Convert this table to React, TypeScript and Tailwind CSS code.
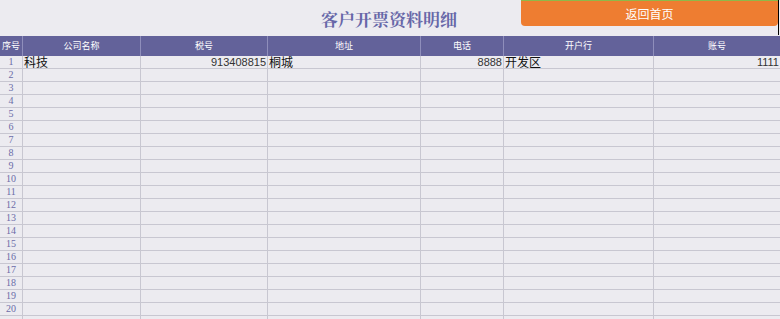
const cols = ["序号", "公司名称", "税号", "地址", "电话", "开户行", "账号"];

const firstRow = [
  { text: "科技", align: "left" },
  { text: "913408815", align: "right" },
  { text: "桐城", align: "left" },
  { text: "8888", align: "right" },
  { text: "开发区", align: "left" },
  { text: "1111", align: "right" },
];

// 20 numbered rows plus the top of the next one, cut off by the window
const rows = Array.from({ length: 21 }, (_, i) => i + 1);

const App = () => {
  return (
    <div className="w-[780px] h-[319px] overflow-hidden bg-[#ecebf0] font-['Noto_Sans_CJK_SC',sans-serif]">
      <div className="flex h-[36px]">
        <div className="w-[521px] flex justify-end items-center pr-[64px] pt-[2px]">
          <h1 className="text-[17px] font-bold text-[#6767a8] font-['Noto_Serif_CJK_SC','Noto_Sans_CJK_SC',serif]">
            客户开票资料明细
          </h1>
        </div>
        <div className="flex flex-col">
          <div className="h-[1px] w-[257px] bg-[#8fb84a]" />
          <button className="w-[257px] h-[25px] bg-[#ee7d31] rounded-b-[4px] text-white text-[12px] leading-none">
            返回首页
          </button>
        </div>
        <div className="w-[1px] h-[35px] bg-black" />
      </div>

      <div className="grid grid-cols-[23px_118px_127px_153px_83px_150px_126px]">
        {cols.map((c, i) => (
          <div
            key={c}
            className={`h-[20px] bg-[#63629a] text-white text-[9px] flex items-center justify-center border-[#8f8ebb] ${
              i < cols.length - 1 ? "border-r" : ""
            }`}
          >
            {c}
          </div>
        ))}

        {rows.map((r) => (
          <div key={r} className="contents">
            <div className="h-[13px] border-r border-b border-[#c8c7d1] text-[10px] leading-[12px] text-center text-[#6b6ba8] font-['Liberation_Serif',serif]">
              {r <= 20 ? r : ""}
            </div>
            {Array.from({ length: 6 }, (_, j) => {
              const cell = r === 1 ? firstRow[j] : null;
              const isText = cell && /[^0-9]/.test(cell.text);
              return (
                <div
                  key={j}
                  className={`h-[13px] border-b border-[#c8c7d1] px-[1px] whitespace-nowrap flex items-center ${
                    j < 5 ? "border-r" : ""
                  } ${cell?.align === "right" ? "justify-end" : "justify-start"} ${
                    isText
                      ? "text-[12px] leading-[12px] text-[#111]"
                      : "text-[11px] leading-[12px] text-[#333] font-['Liberation_Sans',sans-serif]"
                  }`}
                >
                  {cell?.text}
                </div>
              );
            })}
          </div>
        ))}
      </div>
    </div>
  );
};

export default App;
